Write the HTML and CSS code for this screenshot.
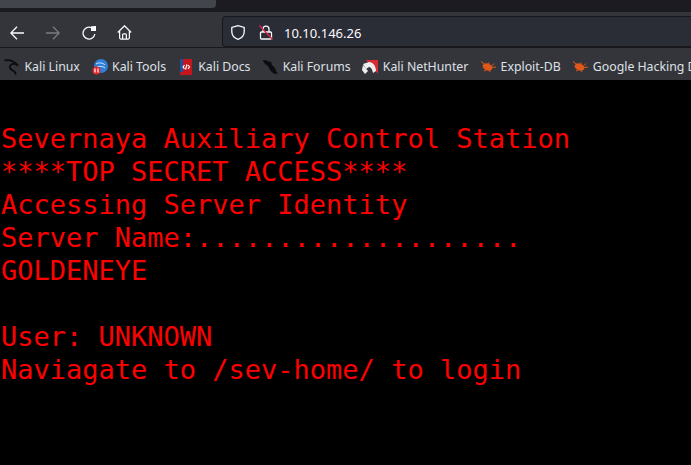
FILE: index.html
```html
<!DOCTYPE html>
<html lang="en">
<head>
<meta charset="utf-8">
<title>GoldenEye</title>
<link rel="stylesheet" href="styles.css">
</head>
<body>
<header class="chrome">
  <div class="tabstrip"><div class="tab"></div></div>
  <nav class="toolbar">
    <svg class="nav-icon back" viewBox="0 0 14 14"><path d="M14 7H.8M7 .8.8 7 7 13.200"/></svg>
    <svg class="nav-icon fwd" viewBox="0 0 14 14"><path d="M0 7h13.200M7 .8 13.200 7 7 13.200"/></svg>
    <svg class="nav-icon reload" viewBox="0 0 14 14"><path d="M12.800 8A5.900 5.900 0 1 1 9 1.600"/><path class="solid" d="M9 .3 14 0v5H9z"/></svg>
    <svg class="nav-icon home" viewBox="0 0 16 16"><path d="M.8 8 8 .8 15.200 8M2.800 6.200v7.500a1.300 1.300 0 0 0 1.300 1.300h7.800a1.300 1.300 0 0 0 1.300-1.300V6.200M6 15v-4.500a1 1 0 0 1 1-1h2a1 1 0 0 1 1 1V15"/></svg>
    <div class="urlbar">
      <svg class="url-icon" viewBox="0 0 14 15"><path d="M7 .7 .8 2.500v4.300C.8 10.500 3.800 13.200 7 14.300c3.200-1.100 6.200-3.800 6.200-7.500V2.500z"/></svg>
      <svg class="url-icon lock" viewBox="0 0 14 15"><path d="M4 6.500V4.200a3 3 0 0 1 6 0v2.300M2.500 7h9a1 1 0 0 1 1 1v5a1 1 0 0 1-1 1h-9a1 1 0 0 1-1-1V8a1 1 0 0 1 1-1z"/><path class="slash" d="M.5 .5l13 14"/></svg>
      <span class="url">10.10.146.26</span>
    </div>
  </nav>
  <div class="bookmarks">
    <a class="bm"><svg class="fav" viewBox="0 0 16 16"><path class="dragon-line" d="M.5 1.500C5 .5 10 2 14 6.500 10.500 4 7 4.500 6 7c-1 3 2.500 4.500 4.500 5.500l1.500 3"/></svg>Kali Linux</a>
    <a class="bm"><svg class="fav" viewBox="0 0 16 16"><circle cx="9" cy="7" r="7" fill="#2f7fd8"/><path d="M4 5c3-2 7-1 9 1M5 8c3-1 6-1 8 1" stroke="#cfe6ff" fill="none"/><circle cx="4.500" cy="11.500" r="4" fill="#e6252b"/><path d="M3 13.500v-4M6 13.500v-4" stroke="#fff" stroke-width="1.200"/></svg>Kali Tools</a>
    <a class="bm"><svg class="fav" viewBox="0 0 16 16"><path fill="#c4161c" d="M2 0h12v16H3a1 1 0 0 1-1-1z"/><path fill="#1d4f9c" d="M2 0h3v13H2z"/><path d="M6.500 6 5 8l1.500 2M10 6l1.500 2L10 10M9 5.500 7.500 10.500" stroke="#fff" fill="none" stroke-width="1.200"/></svg>Kali Docs</a>
    <a class="bm"><svg class="fav" viewBox="0 0 16 16"><path class="dragon" d="M.5 1 5 1.500 7 3l1.500-1L10 6l3 3 1 3 2 3-4.500-.5L8 11 6 7 3 5z"/></svg>Kali Forums</a>
    <a class="bm"><svg class="fav" viewBox="0 0 16 16"><path fill="#d92b33" d="M4 1h12v14z"/><path fill="#eee" d="M1 5 7 3c4 0 7 4 7 9l-3 2c-.5-3-2-6-4-6L4 10z"/><path fill="#eee" d="M1 6l5 6-3 3-3-4z"/></svg>Kali NetHunter</a>
    <a class="bm"><svg class="fav" viewBox="0 0 16 16"><ellipse class="bug" cx="7.500" cy="8" rx="5" ry="3.500" transform="rotate(20 7.500 8)"/><path class="bug-legs" d="M1 2.500 5 5.500M4 12l2-1M9 3.500 8.500 5.500M10 13l-1-2.500M16 8l-4 .5M14 4.500 11.500 7"/></svg>Exploit-DB</a>
    <a class="bm"><svg class="fav" viewBox="0 0 16 16"><ellipse class="bug" cx="7.500" cy="8" rx="5" ry="3.500" transform="rotate(20 7.500 8)"/><path class="bug-legs" d="M1 2.500 5 5.500M4 12l2-1M9 3.500 8.500 5.500M10 13l-1-2.500M16 8l-4 .5M14 4.500 11.500 7"/></svg>Google Hacking DB</a>
  </div>
</header>
<main>
<pre class="terminal">Severnaya Auxiliary Control Station
****TOP SECRET ACCESS****
Accessing Server Identity
Server Name:....................
GOLDENEYE

User: UNKNOWN
Naviagate to /sev-home/ to login</pre>
</main>
</body>
</html>
```
FILE: styles.css
```css
html, body {
  margin: 0;
  height: 100%;
  overflow: hidden;
  background: #000;
}
.chrome {
  font-family: "Noto Sans", sans-serif;
  display: flex;
  flex-direction: column;
}
.tabstrip {
  height: 12px;
  background: #1c1b22;
}
.tab {
  width: 216px;
  height: 8px;
  background: #42454c;
  border-bottom-right-radius: 4px;
}
.toolbar {
  height: 35px;
  background: #33353b;
  box-sizing: border-box;
  display: flex;
  align-items: center;
  padding: 4px 0 0 10px;
}
.nav-icon {
  width: 14px;
  height: 14px;
  margin-top: 2px;
  margin-right: 22px;
  fill: none;
  stroke: #fbfbfe;
  stroke-width: 1.300;
  flex: none;
}
.fwd { stroke: #7b7c80; }
.solid { fill: #fbfbfe; stroke: none; }
.home { width: 15px; height: 15px; margin-right: 0; margin-left: -1px; }
.urlbar {
  margin-left: 90px;
  flex: 1;
  height: 31px;
  box-sizing: border-box;
  background: #2a2c36;
  border: 1px solid #17171c;
  border-right: 0;
  border-radius: 4px 0 0 4px;
  display: flex;
  align-items: center;
  padding: 2px 0 0 8px;
  gap: 14px;
}
.url-icon {
  width: 14px;
  height: 15px;
  fill: none;
  stroke: #fbfbfe;
  stroke-width: 1.300;
  flex: none;
}
.slash { stroke: #e22850; stroke-width: 1.300; }
.url {
  margin-left: -3px;
  color: #fbfbfe;
  font-size: 13px;
}
.bookmarks {
  height: 33px;
  background: #33353b;
  border-top: 1px solid #17171c;
  box-sizing: border-box;
  display: flex;
  align-items: center;
  padding: 5px 0 0 4px;
  gap: 11.700px;
  white-space: nowrap;
  overflow: hidden;
}
.bm {
  display: flex;
  align-items: center;
  gap: 4.500px;
  color: #dfe1e6;
  font-size: 12.300px;
}
.fav {
  width: 16px;
  height: 16px;
  flex: none;
}
.dragon { fill: #0c0c0e; }
.dragon-line { fill: none; stroke: #0c0c0e; stroke-width: 1.800; }
.bug { fill: #e0571a; }
.bug-legs { fill: none; stroke: #e0571a; stroke-width: 1; }
.terminal {
  margin: 0;
  padding: 42px 0 0 1px;
  color: #f00;
  font-family: "DejaVu Sans Mono", monospace;
  font-size: 27px;
  line-height: 33px;
}
```
